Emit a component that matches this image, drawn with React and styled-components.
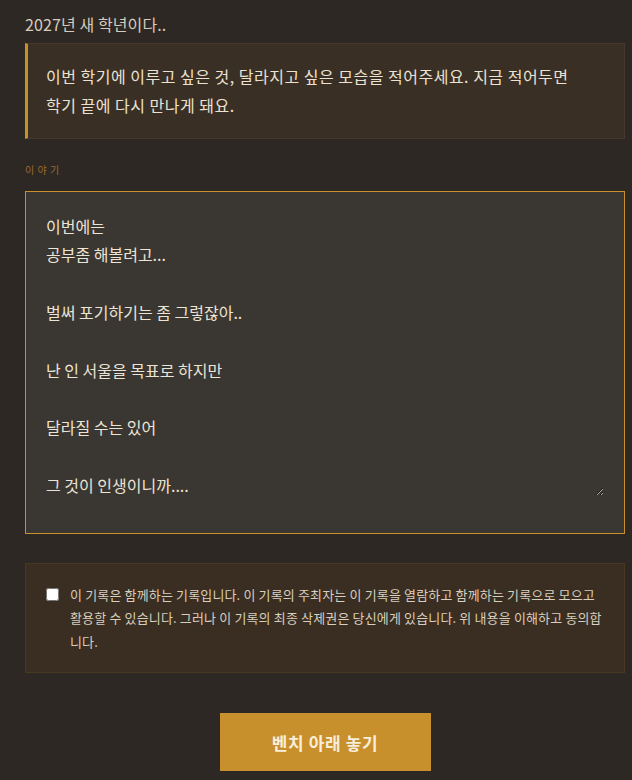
import React from 'react'
import styled, { createGlobalStyle } from 'styled-components'

const GlobalStyle = createGlobalStyle`
  html, body {
    margin: 0;
    padding: 0;
    background-color: #2e2824;
  }
  body {
    font-family: 'Noto Sans CJK KR', 'Noto Sans', sans-serif;
    color: #e6ddcc;
  }
`

const Page = styled.div`
  width: 600px;
  padding: 12px 0 10px 25px;
`
const Heading = styled.div`
  font-size: 16px;
  line-height: 24px;
  letter-spacing: 0.1px;
  color: #d6ccbc;
`
const Prompt = styled.div`
  margin-top: 7px;
  background-color: #3a2f24;
  border: 1px solid #46382a;
  border-left: 3px solid #c8902c;
  padding: 18px 40px 18px 18px;
  font-size: 16px;
  line-height: 1.8;
  letter-spacing: 0.5px;
  word-break: keep-all;
  color: #ebe2d2;
`
const Label = styled.div`
  margin-top: 24px;
  font-size: 10px;
  line-height: 14px;
  letter-spacing: 0.5px;
  color: #9c6a2c;
`
const StoryField = styled.div`
  margin-top: 14px;
  background-color: #3a3632;
  border: 1px solid #c8902c;
  padding: 20px 20px 37px;
`
const StoryInput = styled.textarea`
  display: block;
  box-sizing: border-box;
  width: 100%;
  height: 284px;
  margin: 0;
  padding: 0;
  background: transparent;
  border: none;
  outline: none;
  font-family: 'Noto Sans CJK KR', 'Noto Sans', sans-serif;
  font-size: 16px;
  line-height: 1.8;
  color: #ece4d4;
`
const Consent = styled.label`
  display: flex;
  align-items: flex-start;
  margin-top: 29px;
  background-color: #3a2e22;
  border: 1px solid #47381f;
  padding: 19px 20px;
`
const Check = styled.input`
  flex: none;
  width: 13px;
  height: 13px;
  margin: 5px 11px 0 0;
`
const ConsentText = styled.span`
  font-size: 13px;
  line-height: 23.5px;
  letter-spacing: 0.15px;
  color: #d8cfbf;
`
const Actions = styled.div`
  display: flex;
  justify-content: center;
  margin-top: 40px;
`
const SubmitButton = styled.button`
  width: 211px;
  height: 58px;
  border: none;
  border-radius: 0;
  background-color: #c8902c;
  font-family: 'Noto Sans CJK KR', 'Noto Sans', sans-serif;
  font-size: 17px;
  font-weight: 600;
  letter-spacing: 0.6px;
  color: #f7eedc;
  cursor: pointer;
`

const story = `이번에는
공부좀 해볼려고...

벌써 포기하기는 좀 그렇잖아..

난 인 서울을 목표로 하지만

달라질 수는 있어

그 것이 인생이니까....`

const App = () => {
  return (
    <>
      <GlobalStyle />
      <Page>
        <Heading>2027년 새 학년이다..</Heading>
        <Prompt>
          이번 학기에 이루고 싶은 것, 달라지고 싶은 모습을 적어주세요. 지금 적어두면 학기 끝에 다시 만나게 돼요.
        </Prompt>
        <Label>이 야 기</Label>
        <StoryField>
          <StoryInput defaultValue={story} />
        </StoryField>
        <Consent>
          <Check type="checkbox" />
          <ConsentText>
            이 기록은 함께하는 기록입니다. 이 기록의 주최자는 이 기록을 열람하고 함께하는 기록으로 모으고 활용할 수 있습니다. 그러나 이 기록의 최종 삭제권은 당신에게 있습니다. 위 내용을 이해하고 동의합니다.
          </ConsentText>
        </Consent>
        <Actions>
          <SubmitButton>벤치 아래 놓기</SubmitButton>
        </Actions>
      </Page>
    </>
  )
}

export default App
